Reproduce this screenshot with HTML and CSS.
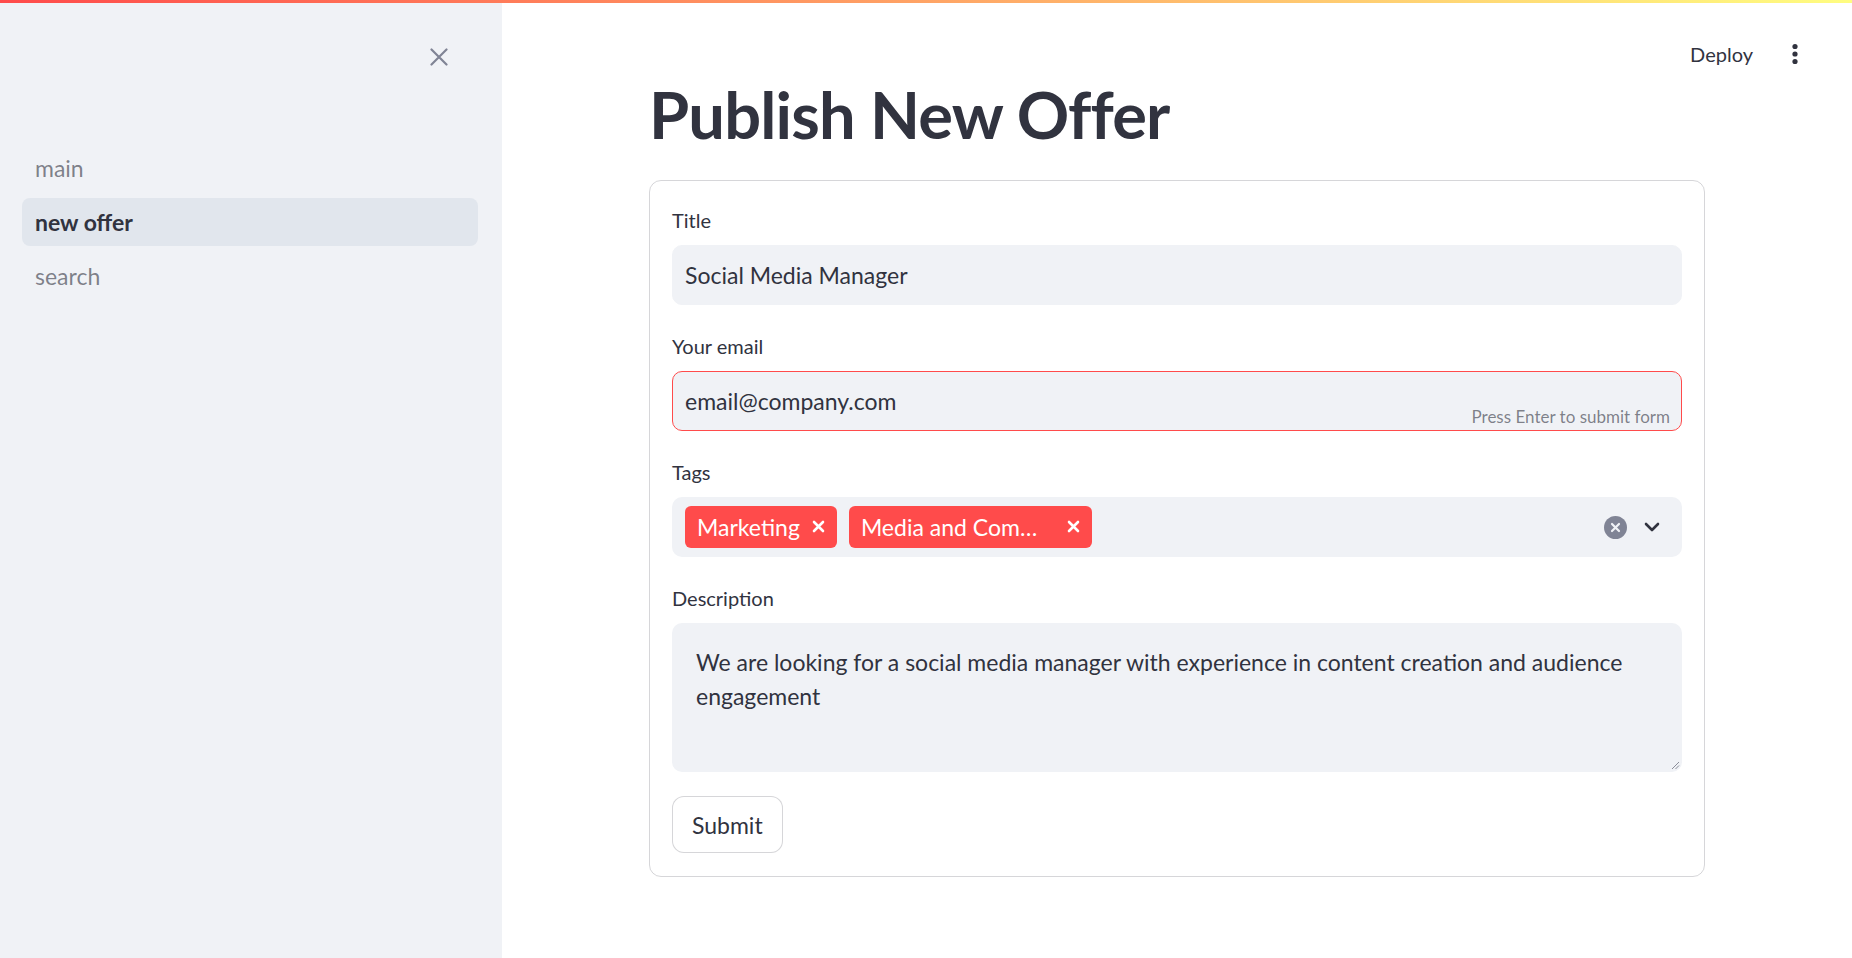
FILE: index.html
```html
<!DOCTYPE html>
<html lang="en">
<head>
<meta charset="utf-8">
<title>new offer</title>
<link rel="stylesheet" href="styles.css">
</head>
<body>
<div class="deco"></div>
<div class="app">
  <aside class="sidebar">
    <div class="sb-head">
      <button class="close-btn" type="button" aria-label="Close sidebar">
        <svg width="18" height="18" viewBox="0 0 18 18"><path d="M1.5 1.5 L16.5 16.5 M16.5 1.5 L1.5 16.5" stroke="#808495" stroke-width="2.2" stroke-linecap="round" fill="none"/></svg>
      </button>
    </div>
    <nav class="nav">
      <a class="nav-item">main</a>
      <a class="nav-item active">new offer</a>
      <a class="nav-item">search</a>
    </nav>
  </aside>
  <main class="main">
    <header class="topbar">
      <span class="deploy">Deploy</span>
      <span class="kebab">
        <svg width="8" height="22" viewBox="0 0 8 22"><circle cx="4" cy="3.5" r="2.6" fill="#31333f"/><circle cx="4" cy="11" r="2.6" fill="#31333f"/><circle cx="4" cy="18.5" r="2.6" fill="#31333f"/></svg>
      </span>
    </header>
    <div class="block">
      <h1 class="page-title">Publish New Offer</h1>
      <form class="form">
        <div class="field">
          <label class="label">Title</label>
          <div class="input"><span class="value">Social Media Manager</span></div>
        </div>
        <div class="field">
          <label class="label">Your email</label>
          <div class="input focused"><span class="value">email@company.com</span><span class="hint">Press Enter to submit form</span></div>
        </div>
        <div class="field">
          <label class="label">Tags</label>
          <div class="select">
            <div class="chips">
              <span class="chip"><span class="chip-text">Marketing</span><svg class="chip-x" width="13" height="13" viewBox="0 0 13 13"><path d="M2 2 L11 11 M11 2 L2 11" stroke="#ffffff" stroke-width="2.6" stroke-linecap="round"/></svg></span>
              <span class="chip wide"><span class="chip-text">Media and Communication</span><svg class="chip-x" width="13" height="13" viewBox="0 0 13 13"><path d="M2 2 L11 11 M11 2 L2 11" stroke="#ffffff" stroke-width="2.6" stroke-linecap="round"/></svg></span>
            </div>
            <div class="select-icons">
              <svg class="clear" width="23" height="23" viewBox="0 0 23 23"><circle cx="11.5" cy="11.5" r="11.5" fill="#808495"/><path d="M8 8 L15 15 M15 8 L8 15" stroke="#f0f2f6" stroke-width="2.2" stroke-linecap="round"/></svg>
              <svg class="chev" width="16" height="10" viewBox="0 0 16 10"><path d="M2 2 L8 8 L14 2" stroke="#31333f" stroke-width="2.6" fill="none" stroke-linecap="round" stroke-linejoin="round"/></svg>
            </div>
          </div>
        </div>
        <div class="field">
          <label class="label">Description</label>
          <div class="textarea">We are looking for a social media manager with experience in content creation and audience engagement
            <svg class="grip" width="10" height="10" viewBox="0 0 10 10"><path d="M9 2 L2 9 M9 5.5 L5.5 9" stroke="#8a8d99" stroke-width="1"/></svg>
          </div>
        </div>
        <div class="actions">
          <button class="submit" type="button">Submit</button>
        </div>
      </form>
    </div>
  </main>
</div>
</body>
</html>
```

FILE: styles.css
```css
* { box-sizing: border-box; }

html, body {
  margin: 0;
  padding: 0;
  height: 100%;
}

body {
  font-family: "Lato", "Noto Sans", sans-serif;
  color: #31333f;
  background: #ffffff;
  overflow: hidden;
}

.deco {
  height: 3px;
  background: linear-gradient(90deg, #ff4b4b, #fffd80);
}

.app {
  display: flex;
  height: calc(100vh - 3px);
}

/* Sidebar */
.sidebar {
  width: 502px;
  flex: 0 0 502px;
  background: #f0f2f6;
  display: flex;
  flex-direction: column;
}

.sb-head {
  height: 141px;
  display: flex;
  justify-content: flex-end;
  align-items: flex-start;
  padding: 36px 45px 0 0;
}

.close-btn {
  width: 36px;
  height: 36px;
  border: 0;
  background: transparent;
  padding: 0;
  display: flex;
  align-items: center;
  justify-content: center;
}

.nav {
  display: flex;
  flex-direction: column;
  gap: 6px;
  padding: 0 24px 0 22px;
}

.nav-item {
  height: 48px;
  display: flex;
  align-items: center;
  padding: 0 13px;
  border-radius: 8px;
  font-size: 23px;
  color: rgba(49, 51, 63, 0.6);
}

.nav-item.active {
  background: rgba(151, 166, 195, 0.16);
  color: #31333f;
  font-weight: 700;
}

/* Main */
.main {
  flex: 1;
  display: flex;
  flex-direction: column;
  min-width: 0;
}

.topbar {
  height: 71px;
  display: flex;
  justify-content: flex-end;
  align-items: flex-start;
  padding: 33px 39px 0 0;
  gap: 24px;
}

.deploy {
  height: 36px;
  display: flex;
  align-items: center;
  font-size: 20px;
}

.kebab {
  width: 36px;
  height: 36px;
  display: flex;
  align-items: center;
  justify-content: center;
}

.block {
  width: 100%;
  max-width: 1056px;
  margin: 0 auto;
}

.page-title {
  margin: 0;
  font-size: 65px;
  line-height: 80px;
  font-weight: 700;
  color: #31333f;
  letter-spacing: -0.8px;
}

.form {
  margin: 26px 0 0;
  border: 1px solid rgba(49, 51, 63, 0.2);
  border-radius: 12px;
  padding: 22px 22px 23px;
  display: flex;
  flex-direction: column;
  gap: 24px;
}

.field {
  display: flex;
  flex-direction: column;
}

.label {
  height: 36px;
  display: flex;
  align-items: center;
  padding-bottom: 2px;
  margin-bottom: 6px;
  font-size: 20px;
  color: #31333f;
}

.input {
  position: relative;
  height: 60px;
  background: #f0f2f6;
  border: 1px solid #f0f2f6;
  border-radius: 10px;
  display: flex;
  align-items: center;
  padding: 0 12px;
  font-size: 23px;
}

.input.focused {
  border-color: #ff4b4b;
}

.hint {
  position: absolute;
  right: 11px;
  bottom: 3px;
  font-size: 17px;
  color: rgba(49, 51, 63, 0.6);
}

.select {
  height: 60px;
  background: #f0f2f6;
  border-radius: 10px;
  display: flex;
  align-items: center;
  justify-content: space-between;
  padding: 0 22px 0 13px;
}

.chips {
  display: flex;
  gap: 12px;
}

.chip {
  height: 42px;
  background: #ff4b4b;
  color: #ffffff;
  border-radius: 6px;
  display: flex;
  align-items: center;
  padding: 0 12px 1px;
  font-size: 23px;
}

.chip.wide {
  width: 243px;
}

.chip-text {
  white-space: nowrap;
  overflow: hidden;
  text-overflow: ellipsis;
  min-width: 0;
}

.chip.wide .chip-text {
  max-width: 184px;
}

.chip-x {
  flex: 0 0 13px;
  margin-left: 12px;
}

.chip.wide .chip-x {
  margin-left: auto;
}

.select-icons {
  display: flex;
  align-items: center;
  gap: 17px;
}

.textarea {
  position: relative;
  height: 149px;
  background: #f0f2f6;
  border-radius: 10px;
  padding: 22px 24px;
  font-size: 23px;
  line-height: 34px;
}

.grip {
  position: absolute;
  right: 2px;
  bottom: 2px;
}

.actions {
  display: flex;
}

.submit {
  height: 57px;
  padding: 0 19px;
  background: #ffffff;
  border: 1px solid rgba(49, 51, 63, 0.2);
  border-radius: 12px;
  font-family: "Lato", "Noto Sans", sans-serif;
  font-size: 23px;
  color: #31333f;
}
```
